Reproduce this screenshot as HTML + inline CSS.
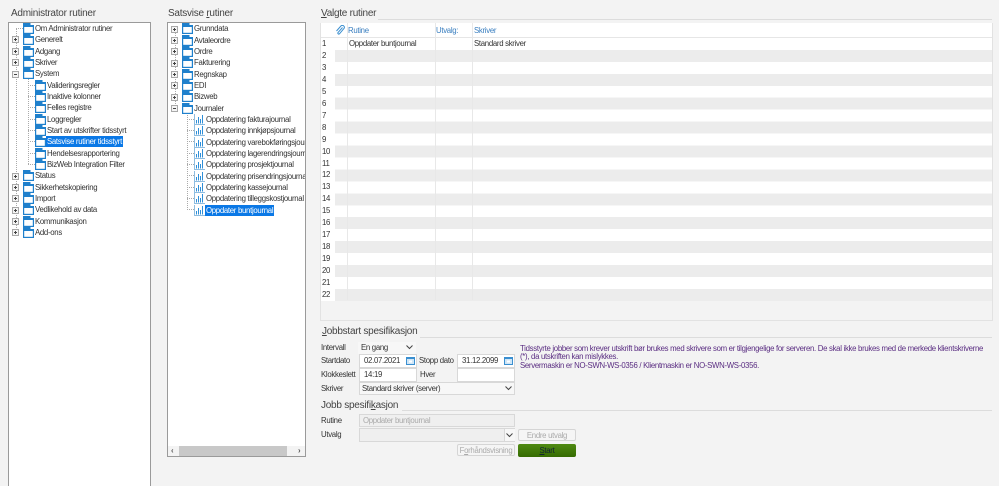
<!DOCTYPE html>
<html><head><meta charset="utf-8"><style>
html,body{margin:0;padding:0;overflow:hidden;height:486px}
body{width:999px;position:relative;background:#f3f3f3;font-family:"Liberation Sans",sans-serif;font-size:7.8px;letter-spacing:-.3px;color:#333}
.a{position:absolute;white-space:nowrap;line-height:11px}
.h{position:absolute;white-space:nowrap;font-size:10px;letter-spacing:-.25px;line-height:13px;color:#444}
.b{position:absolute;box-sizing:border-box}
.p{position:absolute;background:#fff;border:1px solid #9a9a9a;box-sizing:border-box;overflow:hidden}
.i{position:absolute;width:11px;height:11px}
.e{position:absolute;width:7px;height:7px;box-sizing:border-box;border:1px solid #a8a8a8;background:#f4f4f4}
.e:before{content:"";position:absolute;left:1px;top:2px;width:3px;height:1px;background:#444}
.e.x:after{content:"";position:absolute;left:2px;top:1px;width:1px;height:3px;background:#444}
.v{position:absolute;border-left:1px dotted #aaa}
.n{position:absolute;border-top:1px dotted #aaa}
.s{background:#0a78e6;color:#fff;padding:0 1px}
.f{position:absolute;box-sizing:border-box;background:#fff;border:1px solid #d8d8d8;line-height:11px;padding-left:4px;white-space:nowrap}
.g{background:#efefef;color:#aaa}
.l{position:absolute;height:1px;background:#dcdcdc}
.c{position:absolute;color:#3a7fc0;white-space:nowrap;line-height:11px}
.r{position:absolute;left:322px;line-height:11px}
.btn{position:absolute;box-sizing:border-box;border:1px solid #d5d5d5;border-radius:2px;background:#f5f5f5;color:#aaa;text-align:center;line-height:11px;white-space:nowrap}
</style></head><body>
<svg width="0" height="0" style="position:absolute"><defs>
<symbol id="fo" viewBox="0 0 11 11"><rect x="0" y="0" width="7.5" height="3.5" fill="#1f80cc"/><rect x=".6" y="2.6" width="9.8" height="7.8" fill="#fff" stroke="#1f80cc" stroke-width="1.2"/><rect x="1" y="2" width="9" height="2" fill="#1f80cc"/></symbol>
<symbol id="ch" viewBox="0 0 11 11"><path d="M.5 0V10.5H11" fill="none" stroke="#8fbde0"/><path d="M2.5 9.5V6M4.5 9.5V3M6.5 9.5V5M8.5 9.5V1" fill="none" stroke="#2f8fd8"/></symbol>
<symbol id="ca" viewBox="0 0 9 9"><rect x=".5" y="1.5" width="8" height="7" fill="#cfe6f7" stroke="#3a8fd0"/><rect x="1" y="1" width="7" height="2" fill="#3a8fd0"/><rect x="3" y="4.5" width="3" height="2" fill="#fff"/></symbol>
</defs></svg>

<div class="h" style="left:11px;top:7px">Administrator rutiner</div>
<div class="h" style="left:168px;top:7px">Satsvise <u>r</u>utiner</div>
<div class="h" style="left:321px;top:7px"><u>V</u>algte rutiner</div>
<div class="l" style="left:378px;top:19px;width:614px"></div>

<!-- left tree -->
<div class="p" style="left:8px;top:22px;width:143px;height:464px;border-bottom:0"></div>
<div class="v" style="left:16px;top:28px;height:204px"></div>
<div class="v" style="left:28px;top:79px;height:85px"></div>
<div class="n" style="left:16px;top:28px;width:7px"></div>
<div class="n" style="left:28px;top:85px;width:7px"></div>
<div class="n" style="left:28px;top:96px;width:7px"></div>
<div class="n" style="left:28px;top:107px;width:7px"></div>
<div class="n" style="left:28px;top:119px;width:7px"></div>
<div class="n" style="left:28px;top:130px;width:7px"></div>
<div class="n" style="left:28px;top:141px;width:7px"></div>
<div class="n" style="left:28px;top:153px;width:7px"></div>
<div class="n" style="left:28px;top:164px;width:7px"></div>

<svg class="i" style="left:23px;top:23px"><use href="#fo"/></svg><div class="a" style="left:35px;top:23px">Om Administrator rutiner</div>
<div class="e x" style="left:12px;top:36px"></div><svg class="i" style="left:23px;top:34px"><use href="#fo"/></svg><div class="a" style="left:35px;top:34px">Generelt</div>
<div class="e x" style="left:12px;top:48px"></div><svg class="i" style="left:23px;top:46px"><use href="#fo"/></svg><div class="a" style="left:35px;top:46px">Adgang</div>
<div class="e x" style="left:12px;top:59px"></div><svg class="i" style="left:23px;top:57px"><use href="#fo"/></svg><div class="a" style="left:35px;top:57px">Skriver</div>
<div class="e" style="left:12px;top:71px"></div><svg class="i" style="left:23px;top:68px"><use href="#fo"/></svg><div class="a" style="left:35px;top:68px">System</div>
<svg class="i" style="left:35px;top:80px"><use href="#fo"/></svg><div class="a" style="left:47px;top:80px">Valideringsregler</div>
<svg class="i" style="left:35px;top:91px"><use href="#fo"/></svg><div class="a" style="left:47px;top:91px">Inaktive kolonner</div>
<svg class="i" style="left:35px;top:102px"><use href="#fo"/></svg><div class="a" style="left:47px;top:102px">Felles registre</div>
<svg class="i" style="left:35px;top:114px"><use href="#fo"/></svg><div class="a" style="left:47px;top:114px">Loggregler</div>
<svg class="i" style="left:35px;top:125px"><use href="#fo"/></svg><div class="a" style="left:47px;top:125px">Start av utskrifter tidsstyrt</div>
<svg class="i" style="left:35px;top:136px"><use href="#fo"/></svg><div class="a s" style="left:46px;top:136px">Satsvise rutiner tidsstyrt</div>
<svg class="i" style="left:35px;top:148px"><use href="#fo"/></svg><div class="a" style="left:47px;top:148px">Hendelsesrapportering</div>
<svg class="i" style="left:35px;top:159px"><use href="#fo"/></svg><div class="a" style="left:47px;top:159px">BizWeb Integration Filter</div>
<div class="e x" style="left:12px;top:173px"></div><svg class="i" style="left:23px;top:170px"><use href="#fo"/></svg><div class="a" style="left:35px;top:170px">Status</div>
<div class="e x" style="left:12px;top:184px"></div><svg class="i" style="left:23px;top:182px"><use href="#fo"/></svg><div class="a" style="left:35px;top:182px">Sikkerhetskopiering</div>
<div class="e x" style="left:12px;top:195px"></div><svg class="i" style="left:23px;top:193px"><use href="#fo"/></svg><div class="a" style="left:35px;top:193px">Import</div>
<div class="e x" style="left:12px;top:207px"></div><svg class="i" style="left:23px;top:204px"><use href="#fo"/></svg><div class="a" style="left:35px;top:204px">Vedlikehold av data</div>
<div class="e x" style="left:12px;top:218px"></div><svg class="i" style="left:23px;top:216px"><use href="#fo"/></svg><div class="a" style="left:35px;top:216px">Kommunikasjon</div>
<div class="e x" style="left:12px;top:229px"></div><svg class="i" style="left:23px;top:227px"><use href="#fo"/></svg><div class="a" style="left:35px;top:227px">Add-ons</div>

<!-- middle tree -->
<div class="p" style="left:167px;top:22px;width:139px;height:435px">
<div class="v" style="left:7px;top:6px;height:79px"></div>
<div class="v" style="left:19px;top:90px;height:97px"></div>
<div class="n" style="left:19px;top:96px;width:7px"></div>
<div class="n" style="left:19px;top:107px;width:7px"></div>
<div class="n" style="left:19px;top:118px;width:7px"></div>
<div class="n" style="left:19px;top:130px;width:7px"></div>
<div class="n" style="left:19px;top:141px;width:7px"></div>
<div class="n" style="left:19px;top:152px;width:7px"></div>
<div class="n" style="left:19px;top:164px;width:7px"></div>
<div class="n" style="left:19px;top:175px;width:7px"></div>
<div class="n" style="left:19px;top:186px;width:7px"></div>

<div class="e x" style="left:3px;top:3px"></div><svg class="i" style="left:14px;top:0px"><use href="#fo"/></svg><div class="a" style="left:26px;top:0px">Grunndata</div>
<div class="e x" style="left:3px;top:14px"></div><svg class="i" style="left:14px;top:12px"><use href="#fo"/></svg><div class="a" style="left:26px;top:12px">Avtaleordre</div>
<div class="e x" style="left:3px;top:25px"></div><svg class="i" style="left:14px;top:23px"><use href="#fo"/></svg><div class="a" style="left:26px;top:23px">Ordre</div>
<div class="e x" style="left:3px;top:37px"></div><svg class="i" style="left:14px;top:34px"><use href="#fo"/></svg><div class="a" style="left:26px;top:34px">Fakturering</div>
<div class="e x" style="left:3px;top:48px"></div><svg class="i" style="left:14px;top:46px"><use href="#fo"/></svg><div class="a" style="left:26px;top:46px">Regnskap</div>
<div class="e x" style="left:3px;top:59px"></div><svg class="i" style="left:14px;top:57px"><use href="#fo"/></svg><div class="a" style="left:26px;top:57px">EDI</div>
<div class="e x" style="left:3px;top:71px"></div><svg class="i" style="left:14px;top:68px"><use href="#fo"/></svg><div class="a" style="left:26px;top:68px">Bizweb</div>
<div class="e" style="left:3px;top:82px"></div><svg class="i" style="left:14px;top:80px"><use href="#fo"/></svg><div class="a" style="left:26px;top:80px">Journaler</div>
<svg class="i" style="left:26px;top:91px"><use href="#ch"/></svg><div class="a" style="left:38px;top:91px">Oppdatering fakturajournal</div>
<svg class="i" style="left:26px;top:102px"><use href="#ch"/></svg><div class="a" style="left:38px;top:102px">Oppdatering innkjøpsjournal</div>
<svg class="i" style="left:26px;top:114px"><use href="#ch"/></svg><div class="a" style="left:38px;top:114px">Oppdatering varebokføringsjournal</div>
<svg class="i" style="left:26px;top:125px"><use href="#ch"/></svg><div class="a" style="left:38px;top:125px">Oppdatering lagerendringsjournal</div>
<svg class="i" style="left:26px;top:136px"><use href="#ch"/></svg><div class="a" style="left:38px;top:136px">Oppdatering prosjektjournal</div>
<svg class="i" style="left:26px;top:148px"><use href="#ch"/></svg><div class="a" style="left:38px;top:148px">Oppdatering prisendringsjournal</div>
<svg class="i" style="left:26px;top:159px"><use href="#ch"/></svg><div class="a" style="left:38px;top:159px">Oppdatering kassejournal</div>
<svg class="i" style="left:26px;top:170px"><use href="#ch"/></svg><div class="a" style="left:38px;top:170px">Oppdatering tilleggskostjournal</div>
<svg class="i" style="left:26px;top:182px"><use href="#ch"/></svg><div class="a s" style="left:37px;top:182px">Oppdater buntjournal</div>

<div class="b" style="left:0;top:423px;width:137px;height:10px;background:#f3f3f3"></div>
<div class="b" style="left:11px;top:423px;width:108px;height:10px;background:#c8c8c8"></div>
<div class="a" style="left:3px;top:422px;color:#555;font-weight:bold">‹</div>
<div class="a" style="left:130px;top:422px;color:#555;font-weight:bold">›</div>
</div>

<!-- grid -->
<div class="b" style="left:320px;top:23px;width:673px;height:298px;border:1px solid #e2e2e2"></div>
<div class="b" style="left:321px;top:23px;width:671px;height:278px;background:#fff"></div>
<div class="b" style="left:335px;top:37.5px;width:657px;height:263px;background:repeating-linear-gradient(#fff 0,#fff 11.95px,#ececec 11.95px,#ececec 23.9px)"></div>
<div class="l" style="left:321px;top:37px;width:671px;background:#e6e6e6"></div>
<div class="b" style="left:347px;top:23px;width:1px;height:277px;background:#e8e8e8"></div>
<div class="b" style="left:435px;top:23px;width:1px;height:277px;background:#e8e8e8"></div>
<div class="b" style="left:472px;top:23px;width:1px;height:277px;background:#e8e8e8"></div>
<svg style="position:absolute;left:335px;top:25px" width="10" height="11" viewBox="0 0 10 11"><path d="M7.5 2.5L3 7.5a1 1 0 0 0 1.5 1.3L9 3.5a2 2 0 0 0-3-2.6L1.5 6" fill="none" stroke="#3a8fd0"/></svg>
<div class="c" style="left:348px;top:25px">Rutine</div>
<div class="c" style="left:436px;top:25px">Utvalg:</div>
<div class="c" style="left:474px;top:25px">Skriver</div>
<div class="a" style="left:349px;top:38px">Oppdater buntjournal</div>
<div class="a" style="left:474px;top:38px">Standard skriver</div>
<div class="r" style="top:38px">1</div><div class="r" style="top:50px">2</div><div class="r" style="top:62px">3</div><div class="r" style="top:74px">4</div><div class="r" style="top:86px">5</div><div class="r" style="top:98px">6</div><div class="r" style="top:110px">7</div><div class="r" style="top:122px">8</div><div class="r" style="top:134px">9</div><div class="r" style="top:146px">10</div><div class="r" style="top:158px">11</div><div class="r" style="top:169px">12</div><div class="r" style="top:181px">13</div><div class="r" style="top:193px">14</div><div class="r" style="top:205px">15</div><div class="r" style="top:217px">16</div><div class="r" style="top:229px">17</div><div class="r" style="top:241px">18</div><div class="r" style="top:253px">19</div><div class="r" style="top:265px">20</div><div class="r" style="top:277px">21</div><div class="r" style="top:289px">22</div>

<!-- job start -->
<div class="h" style="left:322px;top:325px"><u>J</u>obbstart spesifikasjon</div>
<div class="l" style="left:420px;top:337px;width:572px"></div>
<div class="a" style="left:321px;top:342px">Intervall</div>
<div class="f" style="left:358px;top:342px;width:58px;height:12px;background:#f7f7f7;padding-left:3px;border:none">En gang</div>
<svg style="position:absolute;left:406px;top:345px" width="7" height="5"><path d="M.5 .5L3.5 3.5L6.5 .5" fill="none" stroke="#444"/></svg>
<div class="a" style="left:321px;top:355px">Startdato</div>
<div class="f" style="left:359px;top:354px;width:58px;height:14px;line-height:12px">02.07.2021</div>
<svg style="position:absolute;left:406px;top:356px" width="9" height="9"><use href="#ca"/></svg>
<div class="a" style="left:419px;top:355px">Stopp dato</div>
<div class="f" style="left:457px;top:354px;width:58px;height:14px;line-height:12px">31.12.2099</div>
<svg style="position:absolute;left:504px;top:356px" width="9" height="9"><use href="#ca"/></svg>
<div class="a" style="left:321px;top:369px">Klokkeslett</div>
<div class="f" style="left:359px;top:368px;width:58px;height:14px;line-height:12px">14:19</div>
<div class="a" style="left:420px;top:369px">Hver</div>
<div class="f" style="left:457px;top:368px;width:58px;height:14px"></div>
<div class="a" style="left:321px;top:383px">Skriver</div>
<div class="f" style="left:359px;top:382px;width:156px;height:13px;background:#f7f7f7;padding-left:2px">Standard skriver (server)</div>
<svg style="position:absolute;left:505px;top:386px" width="7" height="5"><path d="M.5 .5L3.5 3.5L6.5 .5" fill="none" stroke="#444"/></svg>

<div class="a" style="left:520px;top:343px;color:#5a2d82">Tidsstyrte jobber som krever utskrift bør brukes med skrivere som er tilgjengelige for serveren. De skal ikke brukes med de merkede klientskriverne</div>
<div class="a" style="left:520px;top:351px;color:#5a2d82">(*), da utskriften kan mislykkes.</div>
<div class="a" style="left:520px;top:360px;color:#5a2d82">Servermaskin er NO-SWN-WS-0356 / Klientmaskin er NO-SWN-WS-0356.</div>

<!-- job spec -->
<div class="h" style="left:321px;top:399px">Jobb spesifi<u>k</u>asjon</div>
<div class="l" style="left:402px;top:410px;width:590px"></div>
<div class="a" style="left:321px;top:415px">Rutine</div>
<div class="f g" style="left:359px;top:414px;width:156px;height:13px;padding-left:3px">Oppdater buntjournal</div>
<div class="a" style="left:321px;top:429px">Utvalg</div>
<div class="f g" style="left:359px;top:428px;width:156px;height:14px"></div>
<div class="b" style="left:504px;top:429px;width:11px;height:12px;background:#f7f7f7;border-left:1px solid #d8d8d8"></div>
<svg style="position:absolute;left:506px;top:433px" width="7" height="5"><path d="M.5 .5L3.5 3.5L6.5 .5" fill="none" stroke="#444"/></svg>
<div class="btn" style="left:518px;top:429px;width:58px;height:12px">Endre utvalg</div>
<div class="btn" style="left:457px;top:444px;width:58px;height:12px">F<u>o</u>rhåndsvisning</div>
<div class="btn" style="left:518px;top:444px;width:58px;height:13px;background:linear-gradient(#4f8a12,#356b02);border:none;color:#123;line-height:13px"><u>S</u>tart</div>
</body></html>
